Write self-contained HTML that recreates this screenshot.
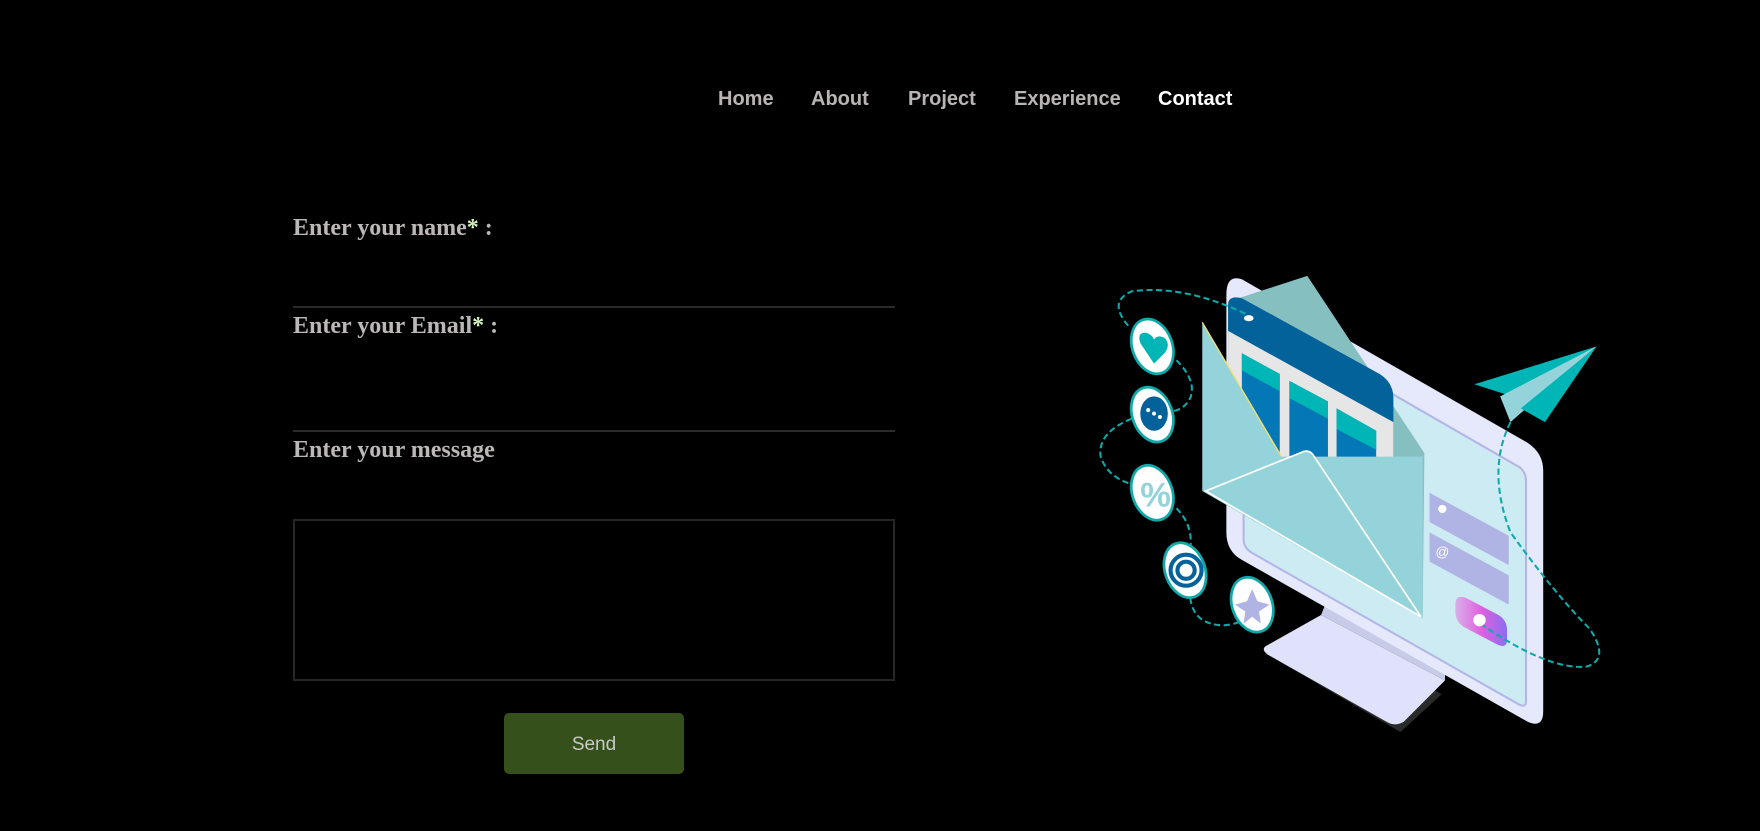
<!DOCTYPE html>
<html><head><meta charset="utf-8"><style>
html,body{margin:0;padding:0;background:#000;width:1760px;height:831px;overflow:hidden}
.nav{position:absolute;top:88px;font-family:"Liberation Sans",sans-serif;font-weight:bold;font-size:20px;color:#b9b5b5}
.lbl{position:absolute;left:293px;font-family:"Liberation Serif",serif;font-weight:bold;font-size:24px;color:#bdb8b8}
.lbl b{color:#d7f0c0}
.line{position:absolute;left:293px;width:602px;height:2px;background:#2a2a2a}
</style></head><body>
<div class="nav" style="left:718px">Home</div>
<div class="nav" style="left:811px">About</div>
<div class="nav" style="left:908px">Project</div>
<div class="nav" style="left:1014px">Experience</div>
<div class="nav" style="left:1158px;color:#fff">Contact</div>

<div class="lbl" style="top:215px">Enter your name<b>*</b> :</div>
<div class="line" style="top:306px"></div>
<div class="lbl" style="top:313px">Enter your Email<b>*</b> :</div>
<div class="line" style="top:430px"></div>
<div class="lbl" style="top:437px">Enter your message</div>
<div style="position:absolute;left:293px;top:519px;width:598px;height:158px;border:2px solid #262626"></div>
<div style="position:absolute;left:504px;top:713px;width:180px;height:61px;background:#35501a;border-radius:5px;color:#c9c9c9;font-family:'Liberation Sans',sans-serif;font-size:19px;line-height:63px;text-align:center">Send</div>

<svg style="position:absolute;left:1080px;top:250px" width="540" height="490" viewBox="0 0 1568 1423" preserveAspectRatio="none">
<defs><linearGradient id="tg" x1="0" x2="1"><stop offset="0" stop-color="#d9b0e8"/><stop offset="0.5" stop-color="#e060e0"/><stop offset="1" stop-color="#8a6ef0"/></linearGradient></defs>
<path d="M545,1175 L930,1400 L1050,1290 L700,1085 Z" fill="#2a2a2a"/>
<path d="M540,1150 L700,1060 L1060,1250 L940,1370 Q915,1385 890,1370 L545,1175 Q525,1160 540,1150Z" fill="#dfe2fa"/>
<path d="M700,1060 L1060,1250 L1060,1200 L720,1010Z" fill="#c8cbe8"/>
<path d="M470,85 L1300,560 Q1345,590 1345,640 L1345,1340 Q1345,1390 1300,1370 L470,900 Q425,875 425,820 L425,130 Q425,70 470,85Z" fill="#e6e8fb"/>
<path d="M485,175 L1275,630 Q1295,645 1295,670 L1295,1310 Q1295,1330 1275,1320 L500,880 Q475,865 475,840 L475,200 Q475,168 485,175Z" fill="#cdebf2" stroke="#b3b6e6" stroke-width="6"/>
<path d="M1015,705 L1245,830 L1245,915 L1015,790Z" fill="#b0b4e4"/>
<path d="M1015,820 L1245,945 L1245,1030 L1015,905Z" fill="#b0b4e4"/>
<circle cx="1052" cy="752" r="12" fill="#fff"/>
<text x="1032" y="890" font-family="Liberation Sans" font-size="40" fill="#fff">@</text>
<path d="M1120,1010 L1215,1060 Q1240,1075 1240,1105 L1240,1130 Q1240,1160 1210,1145 L1115,1095 Q1090,1080 1090,1050 L1090,1030 Q1090,1000 1120,1010Z" fill="url(#tg)"/>
<circle cx="1160" cy="1075" r="18" fill="#fff"/>
<path d="M430,150 L660,75 L1000,590 L995,1060 L430,700Z" fill="#86bfc0"/>
<path d="M430,160 Q430,130 470,140 L870,360 Q910,385 910,430 L910,640 L430,560Z" fill="#03629a"/>
<path d="M430,235 L910,500 L910,660 L430,600Z" fill="#e6e6e6"/>
<path d="M470,300 L580,360 L580,620 L470,560Z" fill="#0478b7"/>
<path d="M470,300 L580,360 L580,410 L470,350Z" fill="#00b5b5"/>
<path d="M608,380 L720,440 L720,700 L608,640Z" fill="#0478b7"/>
<path d="M608,380 L720,440 L720,490 L608,430Z" fill="#00b5b5"/>
<path d="M745,460 L860,525 L860,720 L745,700Z" fill="#0478b7"/>
<path d="M745,460 L860,525 L860,580 L745,520Z" fill="#00b5b5"/>
<ellipse cx="490" cy="198" rx="14" ry="9" fill="#fff"/>
<path d="M355,210 L585,600 L995,600 L995,1070 L355,700Z" fill="#94d3d9"/>
<path d="M355,210 L585,600" stroke="#f0e070" stroke-width="4"/>
<path d="M365,700 L650,585 Q670,580 680,600 L990,1065 L365,700Z" fill="#94d3d9" stroke="#fff" stroke-width="5"/>
<path d="M1145,390 L1500,280 L1270,430Z" fill="#00b5b5"/>
<path d="M1220,425 L1500,280 L1250,500Z" fill="#94d3d9"/>
<path d="M1280,460 L1500,280 L1350,500Z" fill="#00b5b5"/>
<g fill="none" stroke="#0fa9a9" stroke-width="6" stroke-dasharray="18 10">
<path d="M480,185 Q300,100 150,120 Q80,150 140,220"/>
<path d="M280,320 Q340,380 320,430 Q300,470 250,470"/>
<path d="M150,490 Q50,530 60,600 Q80,660 150,680"/>
<path d="M280,750 Q330,800 320,870"/>
<path d="M320,1010 Q330,1090 420,1090 Q460,1085 470,1075"/>
<path d="M1250,500 Q1180,640 1250,820 Q1380,1000 1480,1100 Q1540,1190 1470,1210 Q1360,1220 1170,1090"/>
</g>
<g stroke="#0fa9a9" stroke-width="8" fill="#fff">
<ellipse cx="210" cy="280" rx="58" ry="82" transform="rotate(-20 210 280)"/>
<ellipse cx="210" cy="478" rx="58" ry="82" transform="rotate(-20 210 478)"/>
<ellipse cx="210" cy="705" rx="58" ry="82" transform="rotate(-20 210 705)"/>
<ellipse cx="305" cy="930" rx="58" ry="82" transform="rotate(-20 305 930)"/>
<ellipse cx="500" cy="1030" rx="58" ry="82" transform="rotate(-20 500 1030)"/>
</g>
<path d="M215,330 L175,270 Q165,240 190,240 Q210,245 215,260 Q225,245 245,255 Q265,275 245,300Z" fill="#00b5b5"/>
<ellipse cx="215" cy="475" rx="40" ry="50" fill="#03629a"/>
<circle cx="198" cy="465" r="6" fill="#fff"/><circle cx="215" cy="475" r="6" fill="#fff"/><circle cx="232" cy="485" r="6" fill="#fff"/>
<text x="175" y="745" font-family="Liberation Sans" font-size="100" font-weight="bold" fill="#94d3d9">%</text>
<g fill="none" stroke="#03629a" stroke-width="12"><circle cx="308" cy="930" r="45"/><circle cx="308" cy="930" r="25"/></g>
<path d="M500,985 L515,1020 L550,1030 L520,1050 L525,1085 L500,1065 L475,1085 L480,1050 L450,1030 L485,1020Z" fill="#b0b4e4"/>
</svg>
</body></html>
